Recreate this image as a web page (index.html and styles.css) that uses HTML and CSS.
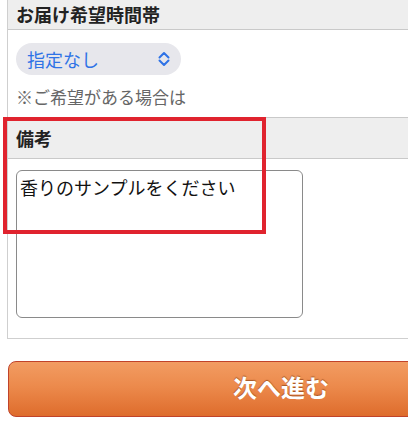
FILE: index.html
```html
<!DOCTYPE html>
<html lang="ja">
<head>
<meta charset="utf-8">
<link rel="stylesheet" href="styles.css">
</head>
<body>
<div class="page">
  <div class="form">
    <div class="head head-first">お届け希望時間帯</div>
    <div class="body body-first">
      <div class="select">
        <span class="select-text">指定なし</span>
        <svg class="chev" width="14" height="16" viewBox="0 0 14 16"><path d="M2.5 6.5 L7 2 L11.5 6.5 M2.5 9.5 L7 14 L11.5 9.5" fill="none" stroke="#2f73e6" stroke-width="2" stroke-linecap="round" stroke-linejoin="round"/></svg>
      </div>
      <div class="note">※ご希望がある場合は</div>
    </div>
    <div class="head head-second">備考</div>
    <div class="body body-second">
      <textarea class="memo">香りのサンプルをください</textarea>
    </div>
  </div>
  <div class="btn">次へ進む</div>
  <div class="highlight"></div>
</div>
</body>
</html>
```

FILE: styles.css
```css
html, body {
  margin: 0;
  padding: 0;
  background: #ffffff;
  overflow: hidden;
}
body {
  width: 408px;
  height: 431px;
  font-family: "Noto Sans CJK JP", "Noto Sans", sans-serif;
  color: #111;
}
.page {
  position: relative;
  width: 408px;
  height: 431px;
  overflow: hidden;
}
.form {
  margin-left: 7px;
  width: 640px;
  border-left: 1px solid #cfcfcf;
  border-bottom: 1px solid #cfcfcf;
}
.head {
  background: #eeeeee;
  font-weight: bold;
  font-size: 18px;
  padding-left: 8px;
  display: flex;
  align-items: center;
  border-bottom: 1px solid #c9c9c9;
  color: #222;
  box-sizing: border-box;
}
.head-first {
  height: 30px;
  padding-bottom: 2px;
}
.head-second {
  border-top: 1px solid #c9c9c9;
  height: 42px;
}
.body {
  padding-left: 8px;
}
.body-first {
  padding-top: 13px;
  padding-bottom: 8px;
}
.select {
  width: 165px;
  height: 32px;
  border-radius: 16px;
  background: #e7e7ec;
  display: flex;
  align-items: center;
  justify-content: space-between;
  box-sizing: border-box;
  padding-left: 11px;
  padding-right: 10px;
}
.select-text {
  font-size: 18px;
  color: #2f73e6;
  line-height: 1;
}
.chev {
  display: block;
}
.note {
  margin-top: 10px;
  line-height: 24px;
  font-size: 17px;
  color: #666;
}
.body-second {
  padding-top: 11px;
  padding-bottom: 20px;
}
.memo {
  display: block;
  width: 287px;
  height: 148px;
  box-sizing: border-box;
  border: 1px solid #8a8a8a;
  border-radius: 6px;
  padding: 5px 3px;
  margin: 0;
  font-family: "Noto Sans CJK JP", "Noto Sans", sans-serif;
  font-size: 18px;
  line-height: 23px;
  color: #111;
  resize: none;
  background: #fff;
}
.btn {
  margin-top: 22px;
  margin-left: 8px;
  width: 546px;
  height: 56px;
  box-sizing: border-box;
  border: 1px solid #c0432a;
  border-radius: 8px;
  background: linear-gradient(to bottom, #f29c62 0%, #ec8a4c 45%, #de6c2c 100%);
  display: flex;
  align-items: center;
  justify-content: center;
  color: #ffffff;
  font-weight: bold;
  font-size: 24px;
  text-shadow: 0 -1px 1px rgba(120, 50, 10, 0.6);
  padding-bottom: 5px;
}
.highlight {
  position: absolute;
  left: 3px;
  top: 117px;
  width: 263px;
  height: 117px;
  box-sizing: border-box;
  border: 4px solid #e0232e;
}
```
